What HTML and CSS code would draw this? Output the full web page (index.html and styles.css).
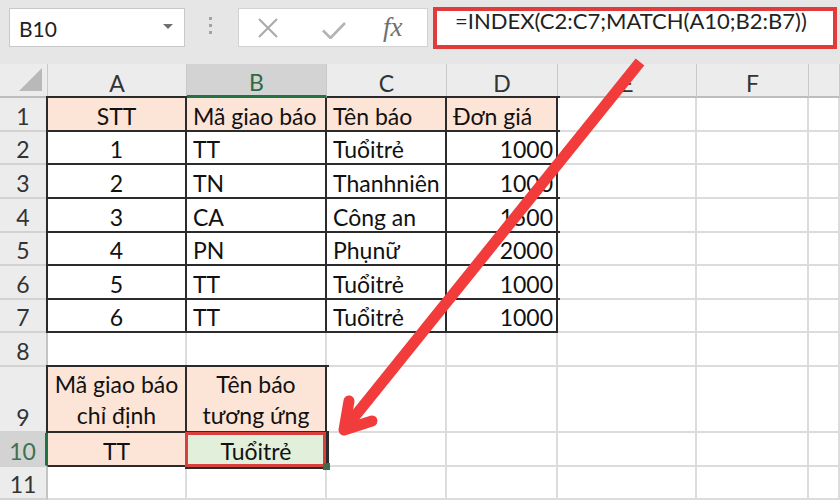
FILE: index.html
```html
<!DOCTYPE html>
<html lang="vi">
<head>
<meta charset="utf-8">
<title>Excel INDEX MATCH</title>
<link rel="stylesheet" href="styles.css">
</head>
<body>
<div class="toolbar">
  <div class="namebox"><span>B10</span><span class="caret"></span></div>
  <div class="grip"><i></i><i></i><i></i></div>
  <div class="fxbox">
    <svg class="ico-x" width="20" height="20" viewBox="0 0 20 20"><path d="M1 1 L19 19 M19 1 L1 19" stroke="#a9a9a9" stroke-width="2" fill="none"/></svg>
    <svg class="ico-ok" width="24" height="17" viewBox="0 0 24 17"><path d="M1 8.5 L8.5 16 L23 1" stroke="#b3b3b3" stroke-width="2.6" fill="none"/></svg>
    <span class="fx">fx</span>
  </div>
  <div class="formula">=INDEX(C2:C7;MATCH(A10;B2:B7))</div>
</div>

<div class="sheet">
  <div class="c hd corner"><svg width="24" height="24" viewBox="0 0 24 24"><path d="M0 23 L23 0 L23 23 Z" fill="#b9b9b9"/></svg></div>
  <div class="c hd">A</div>
  <div class="c hd on">B</div>
  <div class="c hd">C</div>
  <div class="c hd">D</div>
  <div class="c hd">E</div>
  <div class="c hd">F</div>
  <div class="c hd"></div>

  <div class="c rh">1</div>
  <div class="c bd pk ctr">STT</div>
  <div class="c bd pk">Mã giao báo</div>
  <div class="c bd pk">Tên báo</div>
  <div class="c bd pk">Đơn giá</div>
  <div class="c"></div><div class="c"></div><div class="c"></div>

  <div class="c rh">2</div>
  <div class="c bd ctr">1</div>
  <div class="c bd">TT</div>
  <div class="c bd">Tuổitrẻ</div>
  <div class="c bd num">1000</div>
  <div class="c"></div><div class="c"></div><div class="c"></div>

  <div class="c rh">3</div>
  <div class="c bd ctr">2</div>
  <div class="c bd">TN</div>
  <div class="c bd">Thanhniên</div>
  <div class="c bd num">1000</div>
  <div class="c"></div><div class="c"></div><div class="c"></div>

  <div class="c rh">4</div>
  <div class="c bd ctr">3</div>
  <div class="c bd">CA</div>
  <div class="c bd">Công an</div>
  <div class="c bd num">1500</div>
  <div class="c"></div><div class="c"></div><div class="c"></div>

  <div class="c rh">5</div>
  <div class="c bd ctr">4</div>
  <div class="c bd">PN</div>
  <div class="c bd">Phụnữ</div>
  <div class="c bd num">2000</div>
  <div class="c"></div><div class="c"></div><div class="c"></div>

  <div class="c rh">6</div>
  <div class="c bd ctr">5</div>
  <div class="c bd">TT</div>
  <div class="c bd">Tuổitrẻ</div>
  <div class="c bd num">1000</div>
  <div class="c"></div><div class="c"></div><div class="c"></div>

  <div class="c rh">7</div>
  <div class="c bd ctr">6</div>
  <div class="c bd">TT</div>
  <div class="c bd">Tuổitrẻ</div>
  <div class="c bd num">1000</div>
  <div class="c"></div><div class="c"></div><div class="c"></div>

  <div class="c rh">8</div>
  <div class="c"></div><div class="c"></div><div class="c"></div><div class="c"></div>
  <div class="c"></div><div class="c"></div><div class="c"></div>

  <div class="c rh">9</div>
  <div class="c bd pk ctr wrap">Mã giao báo<br>chỉ định</div>
  <div class="c bd pk ctr wrap">Tên báo<br>tương ứng</div>
  <div class="c"></div><div class="c"></div><div class="c"></div><div class="c"></div><div class="c"></div>

  <div class="c rh on">10</div>
  <div class="c bd pk ctr">TT</div>
  <div class="c bd gr ctr active">Tuổitrẻ<span class="selbox"></span><span class="handle"></span></div>
  <div class="c"></div><div class="c"></div><div class="c"></div><div class="c"></div><div class="c"></div>

  <div class="c rh">11</div>
  <div class="c"></div><div class="c"></div><div class="c"></div><div class="c"></div>
  <div class="c"></div><div class="c"></div><div class="c"></div>
</div>

<svg class="arrow" width="840" height="500" viewBox="0 0 840 500">
  <line x1="640" y1="62" x2="347" y2="426" stroke="#f23b3b" stroke-width="11" stroke-linecap="butt"/>
  <polyline points="349,401 344,430 372,421" fill="none" stroke="#f23b3b" stroke-width="11" stroke-linecap="round" stroke-linejoin="round"/>
</svg>
</body>
</html>
```

FILE: styles.css
```css
* { box-sizing: border-box; }

body {
  margin: 0;
  width: 840px;
  height: 500px;
  overflow: hidden;
  position: relative;
  background: #ffffff;
  font-family: Lato, "Open Sans", sans-serif;
  color: #111;
}

/* ---------- formula bar ---------- */
.toolbar {
  display: flex;
  align-items: flex-start;
  height: 64px;
  background: #e6e6e6;
}

.namebox {
  margin: 8px 0 0 9px;
  width: 176px;
  height: 39px;
  background: #fff;
  border: 1px solid #c9c9c9;
  display: flex;
  justify-content: space-between;
  align-items: flex-start;
  padding: 10px 11px 0 9px;
  font-size: 21px;
  line-height: 20px;
  color: #222;
}

.caret {
  width: 0;
  height: 0;
  border-left: 5px solid transparent;
  border-right: 5px solid transparent;
  border-top: 5px solid #707070;
  margin-top: 5px;
}

.grip {
  margin: 17px 0 0 24px;
  display: flex;
  flex-direction: column;
  gap: 4px;
}
.grip i {
  display: block;
  width: 3px;
  height: 3px;
  background: #a3a3a3;
}

.fxbox {
  margin: 8px 0 0 26px;
  width: 190px;
  height: 39px;
  background: #fff;
  border: 1px solid #d2d2d2;
  display: flex;
  align-items: flex-start;
}
.ico-x { margin: 9px 0 0 19px; }
.ico-ok { margin: 13px 0 0 44px; }
.fx {
  margin: 3px 0 0 37px;
  font-family: "Liberation Serif", "DejaVu Serif", serif;
  font-style: italic;
  font-size: 27px;
  line-height: 30px;
  color: #707070;
}

.formula {
  margin: 7px 0 0 5px;
  width: 404px;
  height: 42px;
  background: #fff;
  border: 4px solid #e23b3b;
  padding: 0 0 0 18px;
  font-size: 22px;
  line-height: 20px;
  color: #222;
  white-space: nowrap;
}

/* ---------- sheet grid ---------- */
.sheet {
  display: grid;
  grid-template-columns: 48px 139px 140px 120px 111px 139px 112px 1fr;
  grid-template-rows: 34px repeat(8, 33.625px) 66px 34px 33px;
}

.c {
  background: #fff;
  border-right: 2px solid #dcdcdc;
  border-bottom: 2px solid #dcdcdc;
  display: flex;
  align-items: flex-end;
  padding: 0 6px;
  font-size: 23px;
  line-height: 27px;
  white-space: nowrap;
  overflow: visible;
}

.hd {
  background: #ececec;
  border-right: 1px solid #c9c9c9;
  border-bottom: 2px solid #bdbdbd;
  justify-content: center;
  line-height: 25px;
  color: #333;
}
.hd.on {
  position: relative;
  background: #d3d3d3;
  border-bottom: 3px solid #217346;
  color: #2c6a43;
}
.corner {
  align-items: flex-end;
  justify-content: flex-end;
  padding: 0 4px 4px 0;
}
.corner svg { display: block; }

.rh {
  background: #ececec;
  border-right: 2px solid #c4c4c4;
  border-bottom: 2px solid #d2d2d2;
  justify-content: center;
  padding: 0;
  color: #333;
}
.rh.on {
  position: relative;
  background: #d3d3d3;
  border-right: 3px solid #217346;
  color: #3f7050;
}

.bd {
  border-right-color: #2b2b2b;
  border-bottom-color: #2b2b2b;
  box-shadow: 0 0 0 2px #2b2b2b;
}

.pk { background: #fce4d6; }
.gr { background: #e2efda; }
.ctr { justify-content: center; }
.num { justify-content: flex-end; padding-right: 3px; }

.wrap {
  flex-direction: column;
  align-items: center;
  justify-content: flex-end;
  text-align: center;
  line-height: 31px;
}

.active { position: relative; }
.selbox {
  position: absolute;
  left: -2px;
  top: -1px;
  right: -1px;
  bottom: -2px;
  border: 3px solid #d8403e;
}
.handle {
  position: absolute;
  right: -5px;
  bottom: -5px;
  width: 7px;
  height: 7px;
  background: #3d6b4c;
}

/* ---------- annotation arrow ---------- */
.arrow {
  position: absolute;
  left: 0;
  top: 0;
  pointer-events: none;
}
```
